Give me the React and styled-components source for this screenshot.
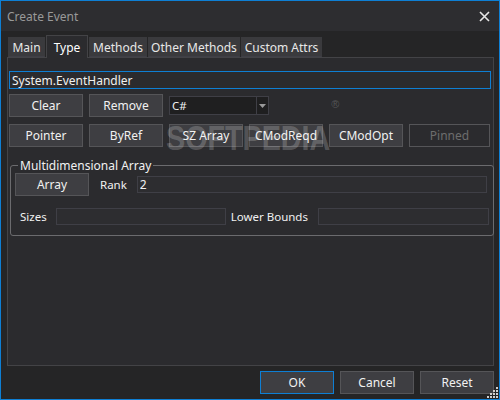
import React from "react";
import styled, { createGlobalStyle } from "styled-components";

const GlobalStyle = createGlobalStyle`
  html, body {
    margin: 0;
    padding: 0;
    background: #252526;
  }
  * {
    box-sizing: border-box;
  }
`;

const tabs = [
  { label: "Main", width: 37 },
  { label: "Type", width: 42, active: true },
  { label: "Methods", width: 58 },
  { label: "Other Methods", width: 92 },
  { label: "Custom Attrs", width: 81 },
];

function CloseIcon() {
  return (
    <svg width="11" height="11" viewBox="0 0 11 11">
      <path d="M1 1 L10 10 M10 1 L1 10" stroke="#e6e6e6" strokeWidth="1.6" />
    </svg>
  );
}

function Grip() {
  const dots = [
    [9, 0],
    [6, 3], [9, 3],
    [3, 6], [6, 6], [9, 6],
    [0, 9], [3, 9], [6, 9], [9, 9],
  ];
  return (
    <svg width="11" height="11" viewBox="0 0 11 11">
      {dots.map(([x, y]) => (
        <rect key={`${x}-${y}`} x={x} y={y} width="2" height="2" fill="#cfcfcf" />
      ))}
    </svg>
  );
}

function App() {
  return (
    <>
      <GlobalStyle />
      <Window>
        <TitleBar>
          <Title>Create Event</Title>
          <CloseButton>
            <CloseIcon />
          </CloseButton>
        </TitleBar>

        <Body>
          <TabRow>
            {tabs.map((t) => (
              <Tab key={t.label} $active={t.active} style={{ width: t.width }}>
                {t.label}
              </Tab>
            ))}
          </TabRow>

          <Panel>
            <TypeInput defaultValue="System.EventHandler" />

            <ButtonRow $top={5}>
              <Button>Clear</Button>
              <Button>Remove</Button>
              <Combo>
                <ComboText>C#</ComboText>
                <ComboArrow>
                  <svg width="7" height="4" viewBox="0 0 7 4">
                    <path d="M0 0 L7 0 L3.5 4 Z" fill="#9a9a9a" />
                  </svg>
                </ComboArrow>
              </Combo>
            </ButtonRow>

            <ButtonRow $top={7}>
              <Button>Pointer</Button>
              <Button>ByRef</Button>
              <Button>SZ Array</Button>
              <Button>CModReqd</Button>
              <Button>CModOpt</Button>
              <Button $wide disabled>
                Pinned
              </Button>
            </ButtonRow>

            <Group>
              <Legend>Multidimensional Array</Legend>
              <GroupRow>
                <Button>Array</Button>
                <FieldLabel $gap={11}>Rank</FieldLabel>
                <Field defaultValue="2" $width={350} $left={10} />
              </GroupRow>
              <GroupRow $top={12}>
                <FieldLabel $gap={5}>Sizes</FieldLabel>
                <Field $width={170} $left={9} />
                <FieldLabel $gap={5}>Lower Bounds</FieldLabel>
                <Field $width={171} $left={10} />
              </GroupRow>
            </Group>
          </Panel>

          <Footer>
            <Button $primary>OK</Button>
            <Button>Cancel</Button>
            <Button>Reset</Button>
          </Footer>
        </Body>

        <GripCorner>
          <Grip />
        </GripCorner>

        <Watermark>
          <WatermarkText>SOFTPEDIA</WatermarkText>
          <Registered>®</Registered>
        </Watermark>
      </Window>
    </>
  );
}

const Window = styled.div`
  position: relative;
  width: 500px;
  height: 400px;
  border: 1px solid #0e7fd4;
  background: #252526;
  display: flex;
  flex-direction: column;
  font-family: "Noto Sans", "Open Sans", sans-serif;
  font-size: 11.5px;
  color: #f1f1f1;
  overflow: hidden;
`;

const TitleBar = styled.div`
  height: 30px;
  flex: none;
  background: #2d2d30;
  display: flex;
  align-items: center;
  justify-content: space-between;
  padding: 0 8px 0 6px;
`;

const Title = styled.span`
  color: #999999;
  font-size: 12px;
`;

const CloseButton = styled.div`
  width: 14px;
  height: 14px;
  display: flex;
  align-items: center;
  justify-content: center;
`;

const Body = styled.div`
  flex: 1;
  display: flex;
  flex-direction: column;
  padding: 4px 5px 0 6px;
`;

const TabRow = styled.div`
  display: flex;
  align-items: flex-end;
  height: 22px;
  padding-left: 1px;
`;

const Tab = styled.div`
  height: ${(p) => (p.$active ? "23px" : "20px")};
  margin-bottom: ${(p) => (p.$active ? "-1px" : "0")};
  margin-right: 1px;
  background: ${(p) => (p.$active ? "#2b2b2e" : "#3a3a3d")};
  border: 1px solid ${(p) => (p.$active ? "#434346" : "#3a3a3d")};
  border-bottom: ${(p) => (p.$active ? "none" : "1px solid #3f3f46")};
  color: ${(p) => (p.$active ? "#ffffff" : "#e8e8e8")};
  font-size: 12px;
  display: flex;
  align-items: center;
  justify-content: center;
  white-space: nowrap;
  position: relative;
  z-index: ${(p) => (p.$active ? 1 : 0)};
`;

const Panel = styled.div`
  width: 487px;
  height: 309px;
  background: #2b2b2e;
  border: 1px solid #434346;
  padding: 13px 0 0 0;
  display: flex;
  flex-direction: column;
`;

const TypeInput = styled.input`
  width: 482px;
  height: 18px;
  margin-left: 1px;
  background: #2b2b2e;
  border: 1px solid #0e7fd4;
  color: #f1f1f1;
  font: inherit;
  font-size: 12px;
  padding: 0 2px;
  outline: none;
`;

const ButtonRow = styled.div`
  display: flex;
  gap: 6px;
  margin-top: ${(p) => p.$top}px;
  padding-left: 1px;
  align-items: center;
`;

const Button = styled.button`
  width: ${(p) => (p.$wide ? "81px" : "74px")};
  height: 23px;
  flex: none;
  background: ${(p) => (p.disabled ? "transparent" : "#3e3e42")};
  border: 1px solid ${(p) => (p.$primary ? "#0e7fd4" : "#555558")};
  color: ${(p) => (p.disabled ? "#6d6d6d" : "#f1f1f1")};
  font: inherit;
  font-size: 12px;
  padding: 0;
`;

const Combo = styled.div`
  width: 100px;
  height: 19px;
  background: #1f1f20;
  border: 1px solid #3f3f46;
  display: flex;
  align-items: center;
`;

const ComboText = styled.span`
  flex: 1;
  padding-left: 2px;
`;

const ComboArrow = styled.div`
  width: 12px;
  height: 100%;
  border-left: 1px solid #3f3f46;
  display: flex;
  align-items: center;
  justify-content: center;
`;

const Group = styled.fieldset`
  margin: 11px 0 0 2px;
  width: 481px;
  height: 78px;
  border: 1px solid #6b6b6e;
  border-radius: 3px;
  padding: 0 4px 0 4px;
`;

const Legend = styled.legend`
  padding: 0 2px;
  margin-left: 3px;
  color: #f1f1f1;
  font-size: 12px;
  line-height: 15px;
`;

const GroupRow = styled.div`
  display: flex;
  align-items: center;
  margin-top: ${(p) => p.$top || 0}px;
`;

const FieldLabel = styled.span`
  margin-left: ${(p) => p.$gap}px;
  white-space: nowrap;
`;

const Field = styled.input`
  width: ${(p) => p.$width}px;
  height: 17px;
  margin-left: ${(p) => p.$left}px;
  background: #2d2d30;
  border: 1px solid #3f3f46;
  color: #f1f1f1;
  font: inherit;
  font-size: 12px;
  padding: 0 2px;
  outline: none;
`;

const Footer = styled.div`
  display: flex;
  justify-content: flex-end;
  gap: 6px;
  margin-top: 5px;
`;

const GripCorner = styled.div`
  position: absolute;
  right: 1px;
  bottom: 1px;
  line-height: 0;
`;

const Watermark = styled.div`
  position: absolute;
  left: 165px;
  top: 98px;
  display: flex;
  align-items: flex-start;
  pointer-events: none;
  color: rgba(255, 255, 255, 0.2);
`;

const WatermarkText = styled.span`
  display: inline-block;
  margin-top: 21px;
  font-family: "Liberation Sans", sans-serif;
  font-weight: bold;
  font-size: 35px;
  line-height: 1;
  transform: scaleX(0.82);
  transform-origin: left center;
  margin-right: -35px;
`;

const Registered = styled.span`
  font-family: "Liberation Sans", sans-serif;
  font-size: 11px;
  line-height: 1;
`;

export default App;
